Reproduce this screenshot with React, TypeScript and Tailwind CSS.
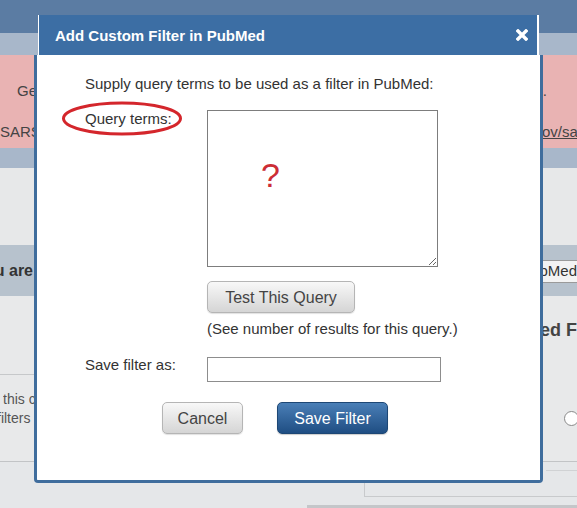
import React from "react";

export default function App() {
  return (
    <div className="relative w-[577px] h-[508px] overflow-hidden bg-[#e5e7e9] font-['Liberation_Sans',Arial,sans-serif] text-[#333]">
      {/* ---------- background page ---------- */}
      <div className="h-[33px] bg-[#5b7ca3]" />
      <div className="h-[22px] bg-[#a8b7ca]" />
      <div className="h-[93px] bg-[#e9b3b3] text-[15px] leading-[17px] text-[#444] overflow-hidden">
        <div className="flex pt-[27px] pl-[17px] pr-[30px] whitespace-nowrap">
          <span className="flex-1 overflow-hidden">Get the latest public health information from CDC</span>
          <span>.</span>
        </div>
        <div className="flex mt-[24px] whitespace-nowrap">
          <span className="w-[542px] shrink-0 overflow-hidden">SARS-CoV-2 literature, sequence, and clinical content: https://www.ncbi.nlm.nih.g</span>
          <span className="underline">ov/sars-cov-2/</span>
        </div>
      </div>
      <div className="h-[20px] bg-[#a8b7ca]" />
      <div className="h-[77px] bg-[#e7e8e9]" />
      <div className="h-[51px] bg-[#b7c2cd] flex items-center justify-between">
        <div className="w-[33px] overflow-hidden flex justify-end">
          <span className="whitespace-nowrap font-bold text-[16px] text-[#333]">Filters you are</span>
        </div>
        <div className="w-[36px] h-[23px] mt-[2px] border border-r-0 border-[#9a9a9a] bg-[#f3f3f3] overflow-hidden flex justify-end items-center">
          <span className="whitespace-nowrap text-[15px] text-[#333]">PubMed</span>
        </div>
      </div>
      <div className="h-[165px] bg-[#e8e9ea] flex justify-between">
        <div className="w-[35px] overflow-hidden">
          <div className="mt-[78px] border-t border-[#c6c8ca]" />
          <div className="mt-[15px] flex flex-col items-end text-[14px] leading-[19px] text-[#555] whitespace-nowrap">
            <div className="w-[32px] overflow-hidden">this category</div>
            <div className="w-[35px] overflow-hidden -ml-[3px] self-start">
              <span className="pl-0">filters</span>
            </div>
          </div>
        </div>
        <div className="w-[34px] overflow-hidden">
          <div className="mt-[24px] whitespace-nowrap font-bold text-[18px] leading-[20px] text-[#444] -ml-[3px]">ed Filters</div>
          <div className="mt-[71px] ml-[21px] w-[15px] h-[15px] rounded-full border border-[#8a8a8a] bg-white" />
        </div>
      </div>
      <div className="h-[47px] border-t border-[#c2c4c6] bg-[#e5e7e9] flex flex-col">
        <div className="flex">
          <div className="w-[364px] shrink-0" />
          <div className="flex-1 h-[35px] border-l border-b border-[#c8cacc] flex flex-col">
            <div className="mt-[8px] ml-[181px] border-t border-[#d0d2d4]" />
          </div>
        </div>
        <div className="mt-[8px] ml-[307px] h-[4px] bg-[#c4c6c9]" />
      </div>

      {/* ---------- modal dialog ---------- */}
      <div className="absolute left-[34px] top-[15px] w-[509px] h-[468px] flex flex-col">
        <div className="mx-[4px] h-[40px] shrink-0 border-l border-r-2 border-white bg-[#3c6ea4] flex items-center justify-between pl-[16px] pr-[9px]">
          <span className="text-white font-bold text-[15px] leading-[17px] whitespace-nowrap">Add Custom Filter in PubMed</span>
          <svg width="12" height="12" viewBox="0 0 12 12" className="-mt-[1px]">
            <path d="M2 2 L10 10 M10 2 L2 10" stroke="white" strokeWidth="3.4" strokeLinecap="square" />
          </svg>
        </div>
        <div className="flex-1 bg-white border-[3px] border-t-0 border-[#3f6d9d] rounded-b-[4px] pl-[48px] text-[15px] leading-[17px] text-[#333]">
          <div className="pt-[20px] whitespace-nowrap">Supply query terms to be used as a filter in PubMed:</div>

          <div className="mt-[18px] flex">
            <div className="w-[122px] shrink-0 whitespace-nowrap">Query terms:</div>
            <div className="flex flex-col items-start">
              <div className="relative">
                <textarea className="block w-[231px] h-[157px] border border-[#7d7d7d] bg-white resize outline-none" />
                <span className="absolute left-[54px] top-[48px] text-[34px] leading-none text-[#cc2d35] pointer-events-none">?</span>
              </div>
              <button className="mt-[14px] w-[148px] h-[32px] rounded-[5px] border border-[#b5b5b5] bg-linear-to-b from-[#f8f8f8] to-[#d5d5d5] text-[16px] text-[#444] shadow-[0_1px_1px_rgba(0,0,0,0.12)]">
                Test This Query
              </button>
              <div className="mt-[7px] whitespace-nowrap">(See number of results for this query.)</div>
            </div>
          </div>

          <div className="mt-[19px] flex">
            <div className="w-[122px] shrink-0 whitespace-nowrap">Save filter as:</div>
            <input type="text" className="mt-[1px] w-[234px] h-[25px] border border-[#8d8d8d] bg-white outline-none" />
          </div>

          <div className="mt-[20px] flex gap-[34px] pl-[77px]">
            <button className="w-[81px] h-[32px] rounded-[5px] border border-[#b5b5b5] bg-linear-to-b from-[#f8f8f8] to-[#d5d5d5] text-[16px] text-[#444] shadow-[0_1px_1px_rgba(0,0,0,0.12)]">
              Cancel
            </button>
            <button className="w-[111px] h-[32px] rounded-[5px] border border-[#1d4775] bg-linear-to-b from-[#4a7fb7] to-[#1f4e83] text-[16px] text-white shadow-[0_1px_1px_rgba(0,0,0,0.2)]">
              Save Filter
            </button>
          </div>
        </div>
      </div>

      {/* ---------- red annotation ellipse ---------- */}
      <svg className="absolute left-[60px] top-[100px] pointer-events-none" width="125" height="38" viewBox="0 0 125 38">
        <ellipse cx="62" cy="18.5" rx="58.5" ry="15.5" fill="none" stroke="#d4262c" strokeWidth="3" />
      </svg>
    </div>
  );
}
